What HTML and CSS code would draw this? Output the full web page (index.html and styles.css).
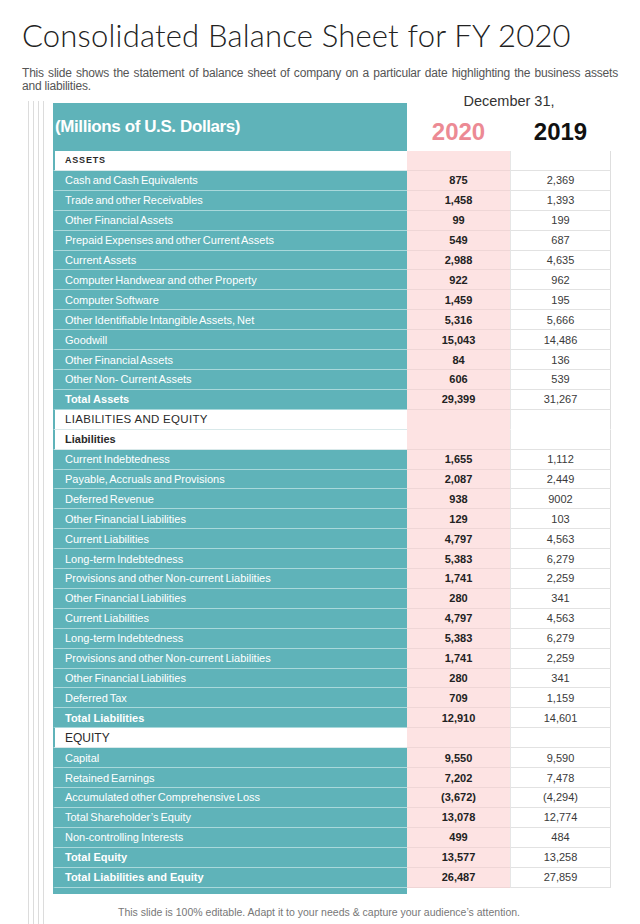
FILE: index.html
```html
<!DOCTYPE html>
<html lang="en">
<head>
<meta charset="utf-8">
<title>Consolidated Balance Sheet for FY 2020</title>
<link rel="stylesheet" href="styles.css">
</head>
<body>
<div class="page">
  <h1 class="title">Consolidated Balance Sheet for FY 2020</h1>
  <p class="subtitle">This slide shows the statement of balance sheet of company on a particular date highlighting the business assets and liabilities.</p>
  <div class="main">
    <div class="rails"></div>
    <div class="content">
      <div class="sheet">
        <div class="head-label"><div class="head-inner">(Millions of U.S. Dollars)</div></div>
        <div class="head-years">
          <div class="dec">December 31,</div>
          <div class="years"><span class="y2020">2020</span><span class="y2019">2019</span></div>
        </div>

        <div class="lab sec-small">ASSETS</div><div class="v20 blank"></div><div class="v19 blank"></div>
        <div class="lab">Cash and Cash Equivalents</div><div class="v20">875</div><div class="v19">2,369</div>
        <div class="lab">Trade and other Receivables</div><div class="v20">1,458</div><div class="v19">1,393</div>
        <div class="lab">Other Financial Assets</div><div class="v20">99</div><div class="v19">199</div>
        <div class="lab">Prepaid Expenses and other Current Assets</div><div class="v20">549</div><div class="v19">687</div>
        <div class="lab">Current Assets</div><div class="v20">2,988</div><div class="v19">4,635</div>
        <div class="lab">Computer Handwear and other Property</div><div class="v20">922</div><div class="v19">962</div>
        <div class="lab">Computer Software</div><div class="v20">1,459</div><div class="v19">195</div>
        <div class="lab">Other Identifiable Intangible Assets, Net</div><div class="v20">5,316</div><div class="v19">5,666</div>
        <div class="lab">Goodwill</div><div class="v20">15,043</div><div class="v19">14,486</div>
        <div class="lab">Other Financial Assets</div><div class="v20">84</div><div class="v19">136</div>
        <div class="lab">Other Non- Current Assets</div><div class="v20">606</div><div class="v19">539</div>
        <div class="lab total">Total Assets</div><div class="v20">29,399</div><div class="v19">31,267</div>

        <div class="lab sec-big">LIABILITIES AND EQUITY</div><div class="v20 blank open"></div><div class="v19 blank open"></div>
        <div class="lab sec-sub">Liabilities</div><div class="v20 blank"></div><div class="v19 blank"></div>
        <div class="lab">Current Indebtedness</div><div class="v20">1,655</div><div class="v19">1,112</div>
        <div class="lab">Payable, Accruals and Provisions</div><div class="v20">2,087</div><div class="v19">2,449</div>
        <div class="lab">Deferred Revenue</div><div class="v20">938</div><div class="v19">9002</div>
        <div class="lab">Other Financial Liabilities</div><div class="v20">129</div><div class="v19">103</div>
        <div class="lab">Current Liabilities</div><div class="v20">4,797</div><div class="v19">4,563</div>
        <div class="lab">Long-term Indebtedness</div><div class="v20">5,383</div><div class="v19">6,279</div>
        <div class="lab">Provisions and other Non-current Liabilities</div><div class="v20">1,741</div><div class="v19">2,259</div>
        <div class="lab">Other Financial Liabilities</div><div class="v20">280</div><div class="v19">341</div>
        <div class="lab">Current Liabilities</div><div class="v20">4,797</div><div class="v19">4,563</div>
        <div class="lab">Long-term Indebtedness</div><div class="v20">5,383</div><div class="v19">6,279</div>
        <div class="lab">Provisions and other Non-current Liabilities</div><div class="v20">1,741</div><div class="v19">2,259</div>
        <div class="lab">Other Financial Liabilities</div><div class="v20">280</div><div class="v19">341</div>
        <div class="lab">Deferred Tax</div><div class="v20">709</div><div class="v19">1,159</div>
        <div class="lab total">Total Liabilities</div><div class="v20">12,910</div><div class="v19">14,601</div>

        <div class="lab sec-eq">EQUITY</div><div class="v20 blank"></div><div class="v19 blank"></div>
        <div class="lab">Capital</div><div class="v20">9,550</div><div class="v19">9,590</div>
        <div class="lab">Retained Earnings</div><div class="v20">7,202</div><div class="v19">7,478</div>
        <div class="lab">Accumulated other Comprehensive Loss</div><div class="v20">(3,672)</div><div class="v19">(4,294)</div>
        <div class="lab">Total Shareholder’s Equity</div><div class="v20">13,078</div><div class="v19">12,774</div>
        <div class="lab">Non-controlling Interests</div><div class="v20">499</div><div class="v19">484</div>
        <div class="lab total">Total Equity</div><div class="v20">13,577</div><div class="v19">13,258</div>
        <div class="lab total">Total Liabilities and Equity</div><div class="v20">26,487</div><div class="v19">27,859</div>
        <div class="tail"></div>
      </div>
      <p class="footer">This slide is 100% editable. Adapt it to your needs &amp; capture your audience’s attention.</p>
    </div>
  </div>
</div>
</body>
</html>
```

FILE: styles.css
```css
* { box-sizing: border-box; }
html, body { margin: 0; padding: 0; background: #fff; }
body {
  font-family: "Liberation Sans", Arial, sans-serif;
  color: #333;
}
.page {
  width: 640px;
  min-height: 924px;
  display: flex;
  flex-direction: column;
}
.title {
  margin: 17px 0 0 22px;
  font-family: Lato, "Liberation Sans", sans-serif;
  font-weight: 300;
  font-size: 31px;
  line-height: 36px;
  color: #222;
  letter-spacing: 0.2px;
}
.subtitle {
  margin: 14px 22px 0 22px;
  font-size: 12px;
  line-height: 13px;
  color: #555;
  text-align: justify;
  letter-spacing: -0.2px;
}
.main {
  flex: 1;
  display: flex;
  margin-top: 0;
}
.rails {
  width: 17px;
  margin-left: 28px;
  margin-top: 8px;
  background: repeating-linear-gradient(to right, #dcdcdc 0 1px, transparent 1px 5px);
}
.content {
  margin-left: 8px;
  display: flex;
  flex-direction: column;
}
.sheet {
  display: grid;
  grid-template-columns: 354px 103px 101px;
  grid-template-rows: 58px repeat(37, 19.92px) 6px;
}
.head-label {
  padding-top: 10px;
}
.head-inner {
  height: 100%;
  background: #5fb3b9;
  color: #fff;
  font-weight: bold;
  font-size: 17px;
  letter-spacing: -0.4px;
  display: flex;
  align-items: center;
  padding-left: 2px;
}
.head-years {
  grid-column: 2 / span 2;
  display: flex;
  flex-direction: column;
  align-items: stretch;
}
.dec {
  text-align: center;
  font-size: 14.5px;
  line-height: 16px;
  color: #333;
  margin-top: 0;
}
.years {
  display: grid;
  grid-template-columns: 103px 101px;
  margin-top: 9px;
}
.y2020, .y2019 {
  text-align: center;
  font-weight: bold;
  font-size: 24px;
  line-height: 28px;
}
.y2020 { color: #ec8a94; }
.y2019 { color: #111; }

.lab {
  background: #5fb3b9;
  border-left: 2px solid #5fb3b9;
  border-bottom: 1px solid #a9d8db;
  color: #fff;
  font-size: 11px;
  word-spacing: -1px;
  padding-left: 10px;
  display: flex;
  align-items: center;
  white-space: nowrap;
}
.lab.total { font-weight: bold; word-spacing: 0; }
.lab.sec-small, .lab.sec-big, .lab.sec-sub, .lab.sec-eq {
  background: #fff;
  color: #2a2a2a;
  border-bottom-color: #d9e9ea;
}
.sec-small {
  font-size: 9px;
  font-weight: bold;
  letter-spacing: 0.8px;
}
.sec-big {
  font-size: 11.5px;
  letter-spacing: 0.3px;
  word-spacing: 0;
}
.sec-sub {
  font-weight: bold;
  font-size: 11px;
}
.sec-eq {
  font-size: 12px;
  word-spacing: 0;
}
.v20, .v19 {
  display: flex;
  align-items: center;
  justify-content: center;
  font-size: 11px;
}
.v20 {
  background: #fde3e3;
  border-bottom: 1px solid #efd6d6;
  font-weight: bold;
  color: #222;
}
.v19 {
  background: #fff;
  border-left: 1px solid #e6e6e6;
  border-right: 1px solid #dedede;
  border-bottom: 1px solid #e2e2e2;
  color: #3a3a3a;
}
.v20.open { border-bottom-color: #fde3e3; }
.v19.open { border-bottom-color: #fff; }
.tail {
  grid-column: 1;
  background: #5fb3b9;
}
.footer {
  width: 532px;
  margin: 12px 0 0 0;
  text-align: center;
  font-size: 10.5px;
  line-height: 13px;
  color: #777;
}
```
